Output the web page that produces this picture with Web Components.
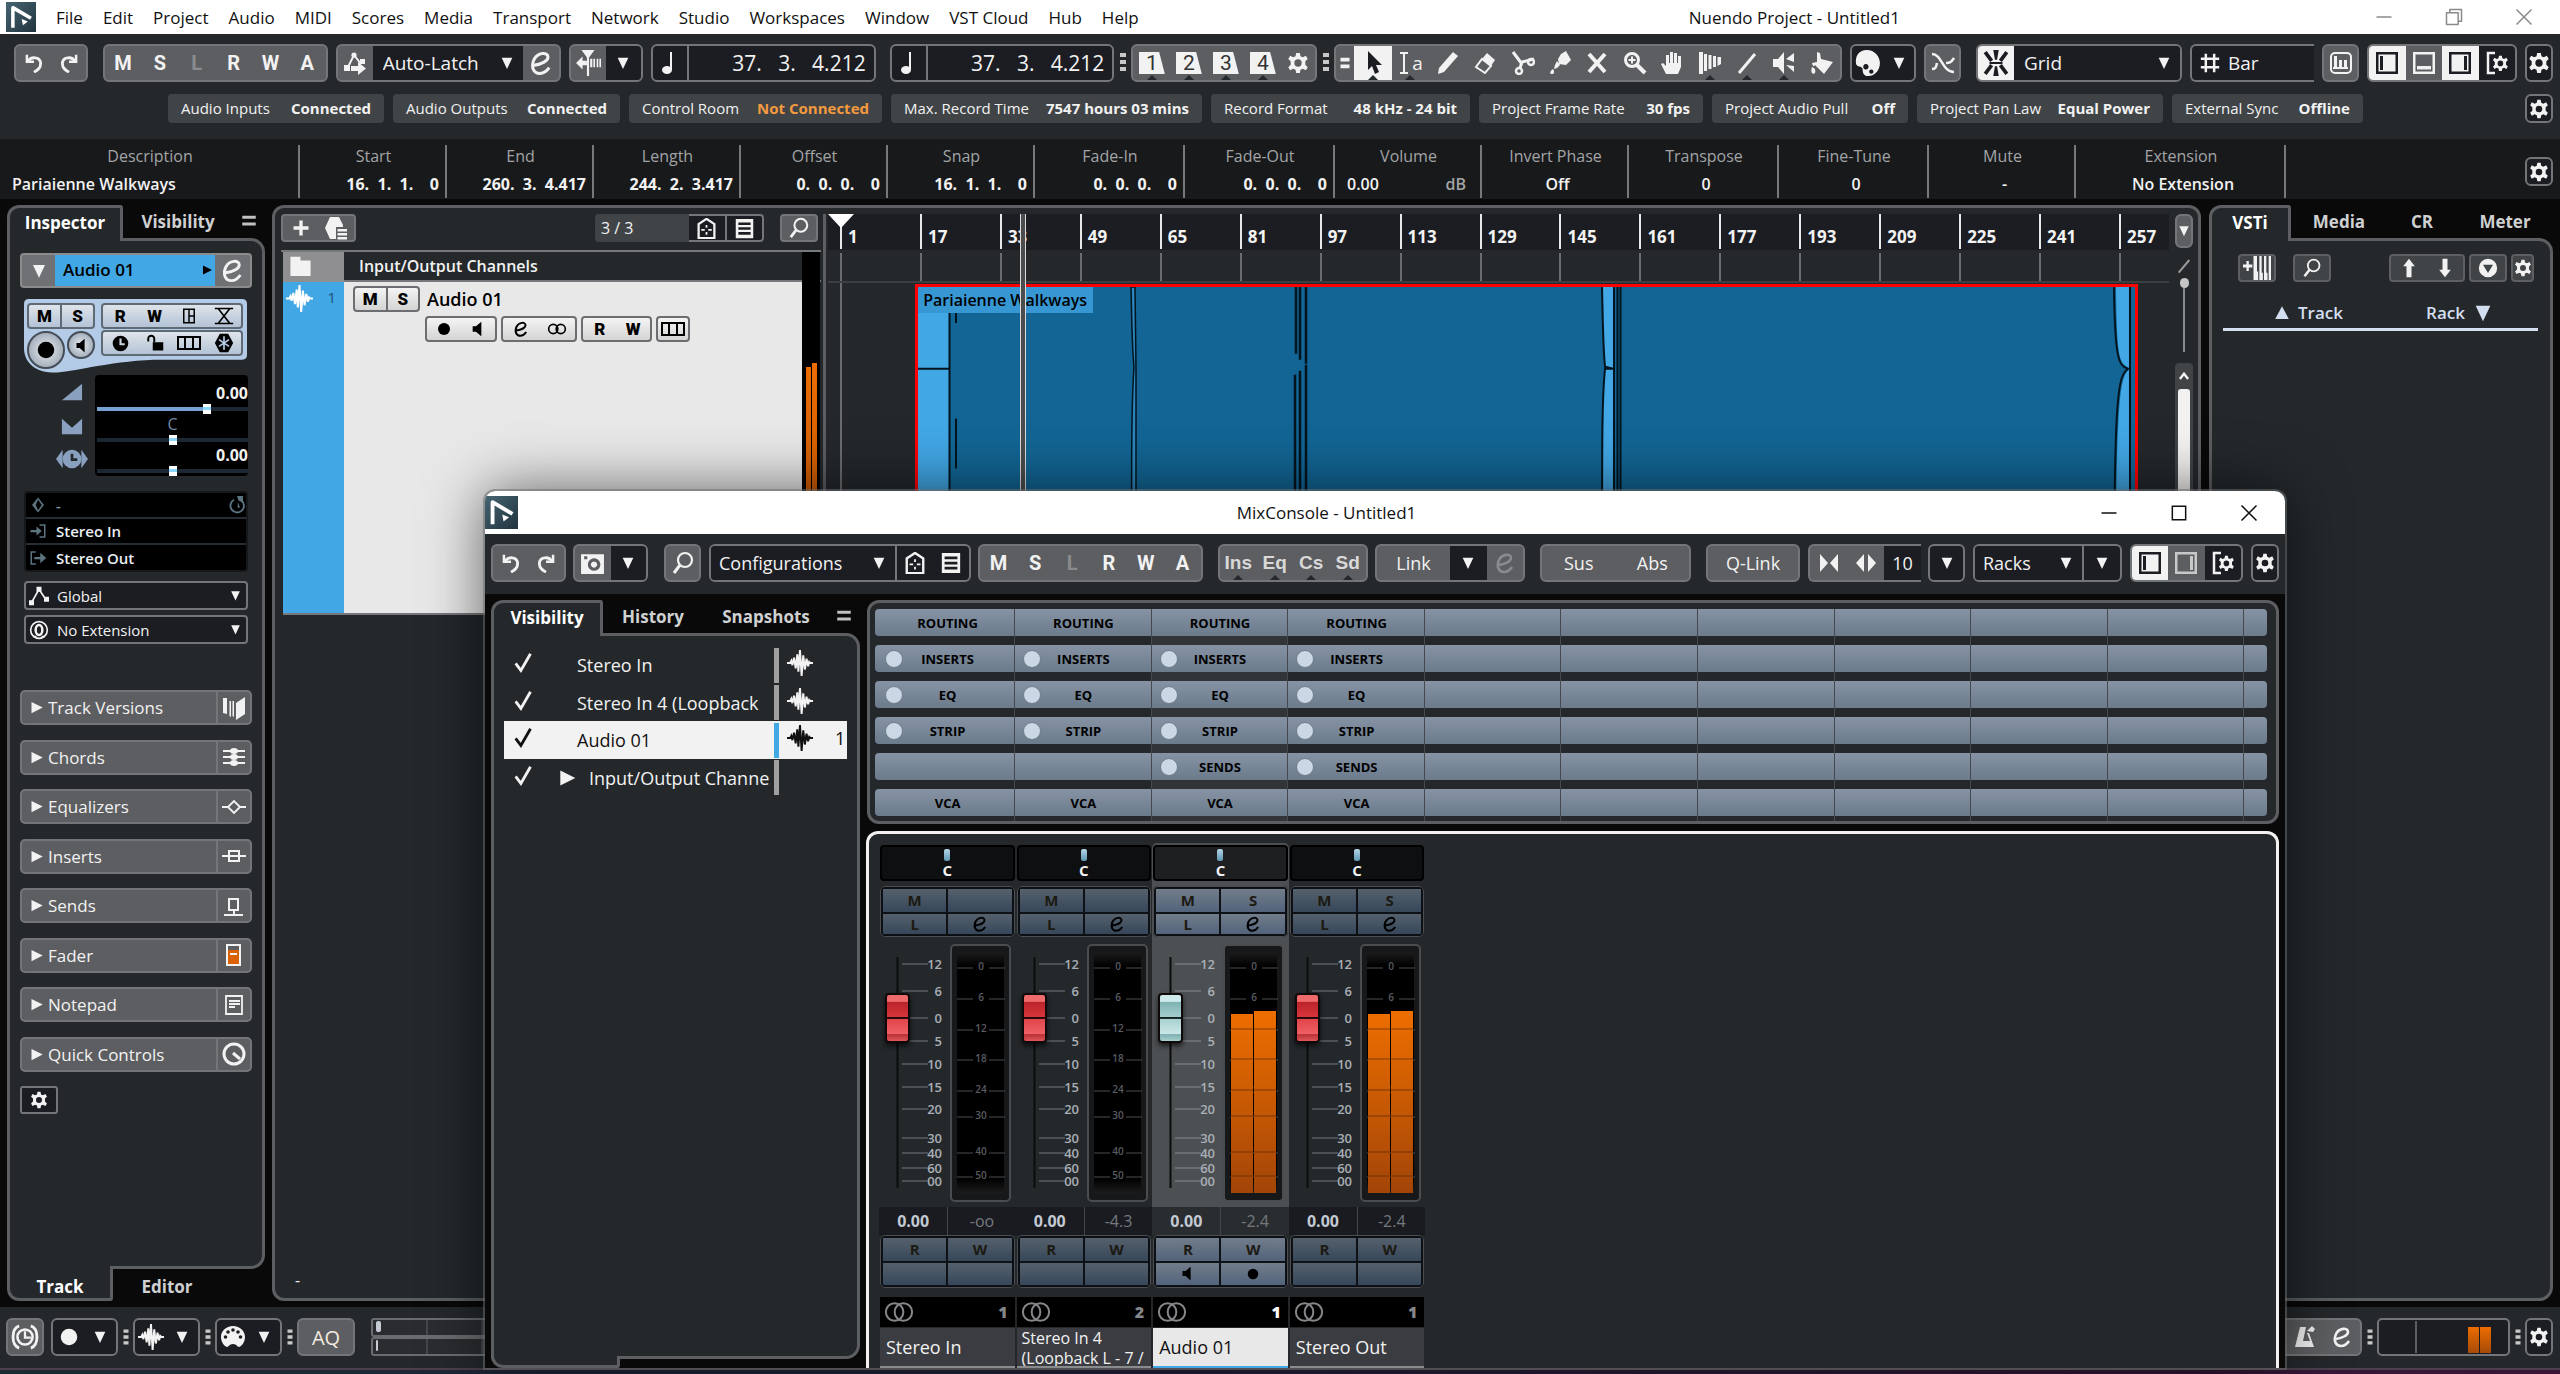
<!DOCTYPE html>
<html lang="en">
<head>
<meta charset="utf-8">
<title>Nuendo Project - Untitled1</title>
<style>
:root{
  --panel:#24282b; --void:#090909; --btn:#5d5e61; --edge:#747578; --field:#1c1d22;
  --frame:#5d5e62; --ink:#f2f2f2; --blue:#41a7e5; --orange:#ec6c00;
}
html,body{margin:0;height:100%;background:#090909;overflow:hidden}
body{font-family:"Open Sans","Noto Sans",sans-serif;color:#f2f2f2}
</style>
</head>
<body>
<nu-desktop></nu-desktop>
<script>
const ICONS = {
  undo:'<path d="M3.500 2v8.500H12" fill="none" stroke="currentColor" stroke-width="3"/><path d="M5 10c3-6 14-6 15 2 0 6-3 8-8 11" fill="none" stroke="currentColor" stroke-width="3.400"/>',
  redo:'<path d="M20.500 2v8.500H12" fill="none" stroke="currentColor" stroke-width="3"/><path d="M19 10C16 4 5 4 4 12c0 6 3 8 8 11" fill="none" stroke="currentColor" stroke-width="3.400"/>',
  autom:'<path d="M4 18 11 4l7 9" fill="none" stroke="currentColor" stroke-width="2"/><circle cx="11" cy="4" r="2.6"/><path d="M1 14h6v6H1zM17 8h5v5h-5z"/><path d="M8 15h7v-4l8 6.500-8 6.500v-4H8z"/>',
  edit:'<path d="M6 14C13 13 18 10 18 7c0-5-9-4-12 2-3 7 0 12 5 12 4 0 6-2 8-5" fill="none" stroke="currentColor" stroke-width="2.600"/>',
  locate:'<path d="M1 12l6-6v4h4v4H7v4zM6 0h12l-5 7h-2z"/><path d="M11 5h2v19h-2zM14 8h2v8h-2zM17 8h1.500v8H17zM20 8h1.500v8H20zM22.500 8H24v8h-1.500z"/>',
  note:'<ellipse cx="9" cy="19" rx="5" ry="4"/><path d="M12 1h2v18h-2z"/>',
  gear:'<path d="M10 1h4l.7 3.600 2.500 1.200 3.400-1.800 2 3.500-2.600 2.500v4l2.600 2.500-2 3.500-3.400-1.800-2.500 1.200L14 23h-4l-.7-3.600-2.500-1.200L3.400 20l-2-3.500L4 14v-4L1.400 7.500l2-3.500 3.400 1.800 2.500-1.200zM12 8a4 4 0 1 0 0 8 4 4 0 0 0 0-8z" fill-rule="evenodd"/>',
  dots:'<path d="M9 3h6v4H9zM9 10h6v4H9zM9 17h6v4H9z"/>',
  handle:'<path d="M6 5h12v5H6zM6 14h12v5H6z"/>',
  arrow:'<path d="M7 0v19l4-4 3 8 4-2-3-7h6z"/>',
  range:'<path d="M2 2h8M2 22h8M6 2v20" fill="none" stroke="currentColor" stroke-width="2"/>',
  pencil:'<path d="M2 23l1-6L17 1l5 4L8 21zM4 18l3 2" fill-rule="evenodd"/>',
  eraser:'<path d="M14 2l8 7-4 6-9-7z"/><path d="M9 8l9 7-6 7-9-6z" fill="none" stroke="currentColor" stroke-width="2"/>',
  scissors:'<path d="M2 1l9 12M23 8l-12 3-2 6" fill="none" stroke="currentColor" stroke-width="3"/><circle cx="20" cy="11" r="3" fill="none" stroke="currentColor" stroke-width="2.500"/><circle cx="8" cy="20" r="3" fill="none" stroke="currentColor" stroke-width="2.500"/>',
  glue:'<path d="M13 3l5-3 5 9-5 5-7-1-1-5zM9 10l3 4-3 3-3 1 1-4zM5 18c2 3 1 5-1 5s-3-2 1-5z"/>',
  ex:'<path d="M4 3l16 18M20 3L4 21" fill="none" stroke="currentColor" stroke-width="4"/>',
  zoomt:'<circle cx="9" cy="9" r="6.500" fill="none" stroke="currentColor" stroke-width="3"/><path d="M14 14l8 8" stroke="currentColor" stroke-width="4"/><path d="M5.500 8h7v2h-7zM8 5.500h2v7H8z"/>',
  hand:'<path d="M6 23l-5-10 2-1 3 3V4h3v8h1V1h3v11h1V2h3v10h1V5h3v11l-3 7z"/>',
  comp:'<path d="M1 1h4v22H1zM6 3h3v17H6zM10.500 4h3v14h-3zM15 5h3v11h-3zM19.500 6H23v7l-3.500 2z"/>',
  line:'<path d="M4 22L20 3" stroke="currentColor" stroke-width="3" fill="none"/>',
  speakert:'<path d="M1 8h5l6-7v22l-6-7H1zM14 8l8-6v9zM14 14l8 1v6z"/>',
  bucket:'<path d="M7 1l3 1 1 6 12 3-9 12-9-9-1 1h-1l-1-3 5-1zM2 16c3 1 4 3 3 6-2 2-5 0-3-6z"/>',
  palette:'<path d="M11 0C3 0 0 6 1 13c1 3 5 2 6 4 0 4 1 7 5 7 7 0 11-6 11-12S18 0 11 0zM10 13a2.500 2.500 0 1 0 .1 0M15 18a2 2 0 1 0 .1 0" fill-rule="evenodd"/>',
  curve:'<path d="M1 3c10 0 10 18 22 18M23 7c-3 5-5 5-8 5M1 18c3 0 4-1 5-6" fill="none" stroke="currentColor" stroke-width="2.500"/>',
  snap:'<path d="M9.500 0h5L13 9h-2zM9.500 24h5L13 15h-2z"/><path d="M2 2l6 8M22 2l-6 8M2 22l6-8M22 22l-6-8" stroke="currentColor" stroke-width="3.400"/><path d="M6 11h12v2H6z"/>',
  hash:'<path d="M7 1v22M17 1v22M1 7h22M1 17h22" stroke="currentColor" stroke-width="3"/>',
  quant:'<rect x="2" y="2" width="20" height="20" rx="4" fill="none" stroke="currentColor" stroke-width="2"/><path d="M5 5h3v13H5zM10 9h3v9h-3zM15 9h3v9h-3zM4 16h15v2H4z"/>',
  pleft:'<path d="M1 1h22v22H1zM3.500 3.500v17h17v-17z" fill-rule="evenodd"/><path d="M5 5h3v14H5z"/>',
  pbot:'<path d="M1 1h22v22H1zM3.500 3.500v17h17v-17z" fill-rule="evenodd"/><path d="M5 15h14v3.500H5z"/>',
  pright:'<path d="M1 1h22v22H1zM3.500 3.500v17h17v-17z" fill-rule="evenodd"/><path d="M16 5h3v14h-3z"/>',
  psetup:'<path d="M10 2H3v20h7" fill="none" stroke="currentColor" stroke-width="2.500"/><g transform="translate(7 4) scale(.7)"><path d="M10 1h4l.7 3.600 2.500 1.200 3.400-1.800 2 3.500-2.600 2.500v4l2.600 2.500-2 3.500-3.400-1.800-2.500 1.200L14 23h-4l-.7-3.600-2.500-1.200L3.400 20l-2-3.500L4 14v-4L1.400 7.500l2-3.500 3.400 1.800 2.500-1.200zM12 8a4 4 0 1 0 0 8 4 4 0 0 0 0-8z" fill-rule="evenodd"/></g>',
  down:'<path d="M4 4h16l-8 17z"/>',
  right:'<path d="M4 3l18 9-18 9z"/>',
  up:'<path d="M3 20h18L12 3z"/>',
  plus:'<path d="M10 3h4v7h7v4h-7v7h-4v-7H3v-4h7z"/>',
  preset:'<path d="M6 1h9l4 8v2h-7v12H6L1 12zM13.500 13H23v2.500h-9.500zM13.500 17H23v2.500h-9.500zM13.500 21H23v2.500h-9.500z"/>',
  agent:'<path d="M12 1l9 6v16H3V7z" fill="none" stroke="currentColor" stroke-width="2.600"/><path d="M11 8h2v3h-2zM11 16h2v3h-2zM6 12.500h4v2H6zM14 12.500h4v2h-4z"/>',
  list:'<path d="M2 1h20v22H2zM5 5v3h14V5zM5 10.500v3h14v-3zM5 16v3h14v-3z" fill-rule="evenodd"/>',
  find:'<ellipse cx="14" cy="9" rx="7" ry="7" fill="none" stroke="currentColor" stroke-width="2.200"/><path d="M9 14l-6 8" stroke="currentColor" stroke-width="3"/>',
  folder:'<path d="M1 2h11v4h11v17H1z"/>',
  wave:'<path d="M0 12h3l1-2 1 4 1.500-7L8 17l1.500-13 1 16L12 0l1.500 24L15 5l1.500 13L18 8l1.500 7 1-4 1 1H24" fill="none" stroke="currentColor" stroke-width="1.800"/>',
  rec:'<circle cx="12" cy="12" r="9"/>',
  mon:'<path d="M4 8h5l8-7v22l-8-7H4z"/>',
  infin:'<circle cx="7.500" cy="12" r="5.500" fill="none" stroke="currentColor" stroke-width="2"/><circle cx="16.500" cy="12" r="5.500" fill="none" stroke="currentColor" stroke-width="2"/>',
  stereo:'<circle cx="8.500" cy="12" r="7" fill="none" stroke="currentColor" stroke-width="1.600"/><circle cx="15.500" cy="12" r="7" fill="none" stroke="currentColor" stroke-width="1.600"/>',
  lanes:'<path d="M0 5h24v14H0zM2 7v10h5V7zM9 7v10h6V7zM17 7v10h5V7z" fill-rule="evenodd"/>',
  split:'<path d="M4 2h16v20H4zM6 4v16h5V4zM13 4v7h5V4zM13 13v7h5v-7z" fill-rule="evenodd"/>',
  xfade:'<path d="M1 3h4l14 18h4M23 3h-4L5 21H1M4 3h16M4 21h16" fill="none" stroke="currentColor" stroke-width="2"/>',
  clock:'<path d="M12 1a11 11 0 1 0 0 22 11 11 0 0 0 0-22zM10.500 5h3v6.500H18v3h-7.500z" fill-rule="evenodd"/>',
  lock:'<path d="M9 11h14v11H9z"/><path d="M11 11V6c0-5-8-5-8 0v4" fill="none" stroke="currentColor" stroke-width="2.600"/>',
  freeze:'<path d="M7 1h10l6 11-6 11H7L1 12z"/><path d="M12 4v16M6 8l12 8M18 8L6 16" stroke="#b9cde6" stroke-width="2"/>',
  vol:'<path d="M1 21L23 3v18z"/>',
  pan:'<path d="M1 4l11 10L23 4v17H1z"/>',
  delay:'<path d="M0 12l5-7v14zM24 12l-5-7v14z"/><path d="M12 5a7 7 0 1 0 0 14 7 7 0 0 0 0-14zM11 8h2v3.500h3v2h-5z" fill-rule="evenodd"/>',
  diamond:'<path d="M12 2l8 10-8 10-8-10zM12 5l-3 7 3 7 5-7z" fill-rule="evenodd"/>',
  phase:'<path d="M18 6A9 9 0 1 1 8 5" fill="none" stroke="currentColor" stroke-width="2.500"/><path d="M12 0h8v9l-6-3zM13 8l3 7-3 1z"/>',
  input:'<path d="M14 4h7v16h-7" fill="none" stroke="currentColor" stroke-width="2"/><path d="M2 10.500h8V6l7 6-7 6v-4.500H2z"/>',
  output:'<path d="M9 4H3v16h6" fill="none" stroke="currentColor" stroke-width="2"/><path d="M7 10.500h8V5l8 7-8 7v-5.500H7z"/>',
  nodes:'<path d="M3 20L12 4l8 12" fill="none" stroke="currentColor" stroke-width="2"/><path d="M0 17h6v6H0zM9 1h6v6H9zM18 13h6v6h-6z"/>',
  ext:'<ellipse cx="12" cy="12" rx="10" ry="10" fill="none" stroke="currentColor" stroke-width="2"/><ellipse cx="12" cy="12" rx="4" ry="6" fill="none" stroke="currentColor" stroke-width="3"/><path d="M5 20h4M15 20h4" stroke="currentColor" stroke-width="2"/>',
  versions:'<path d="M1 2h4v16l-4-1zM7.500 5H9v16l-1.500-1zM10.500 5H12v16l-1.500-1zM14 7l9-6v17l-9 6z"/>',
  chords:'<path d="M1 6h22M1 12h22M1 18h22" stroke="currentColor" stroke-width="2"/><ellipse cx="12" cy="6" rx="4" ry="3"/><ellipse cx="12" cy="12" rx="4" ry="3"/><ellipse cx="12" cy="18" rx="4" ry="3"/>',
  eq:'<path d="M0 12h6l6-6 6 6h6M6 12l6 6 6-6" fill="none" stroke="currentColor" stroke-width="1.800"/>',
  inserts:'<path d="M0 12h24M7 7h10v10H7z" fill="none" stroke="currentColor" stroke-width="2"/>',
  sends:'<path d="M2 21h19M12 21v-5M7 5h9v11H7z" fill="none" stroke="currentColor" stroke-width="2"/>',
  fader:'<path d="M5 2h13v20H5z" fill="none" stroke="currentColor" stroke-width="2"/><path d="M6 7h11v14H6z" fill="#d96100"/><path d="M8 11h7" stroke="currentColor" stroke-width="2"/>',
  notepad:'<path d="M4 3h16v18H4zM7 8h11M7 11h11M7 14h6" fill="none" stroke="currentColor" stroke-width="1.800"/>',
  knob:'<circle cx="12" cy="12" r="10" fill="none" stroke="currentColor" stroke-width="3"/><path d="M11 11l7 6" stroke="currentColor" stroke-width="3"/>',
  sync:'<circle cx="12" cy="12" r="6.500" fill="none" stroke="currentColor" stroke-width="2.200"/><path d="M11 7h2v4.500h4v2h-6z"/><path d="M7 2.500C0 5 0 19 7 21.500M17 2.500c7 2.500 7 16.500 0 19" fill="none" stroke="currentColor" stroke-width="2.400"/>',
  midi:'<path d="M12 1c7 0 12 5 12 11 0 5-3 9-6 10-2 0-2-3-6-3s-4 3-6 3c-3-1-6-5-6-10C0 6 5 1 12 1z"/><g fill="#1c1d22"><circle cx="4.500" cy="12" r="1.800"/><circle cx="7" cy="7" r="1.800"/><circle cx="12" cy="5" r="1.800"/><circle cx="17" cy="7" r="1.800"/><circle cx="19.500" cy="12" r="1.800"/></g>',
  metro:'<path d="M7 2h6l-3 14h7l-3-8h2l5 14H2z"/><path d="M14 6l5-5 3 3-2 3z"/>',
  camera:'<path d="M1 3h22v19H1zM13.500 7a6 6 0 1 0 .1 0zM13.500 10a3 3 0 1 1-.1 0zM4 5v3h3V5z" fill-rule="evenodd"/>',
  narrow:'<path d="M3 3l8 9-8 9zM21 3l-8 9 8 9z"/>',
  wide:'<path d="M10 3v18l-8-9zM14 3v18l8-9z"/>',
  vsti:'<path d="M0 9h3V6h2v3h3v2.500H5v3H3v-3H0zM9 1h3v14h1v8H9zM14 16V1h2v15h1v7h-3zM18 16V1h2v15h1v7h-3zM22 1h2v22h-2z"/>',
  aup:'<path d="M12 1l7 9h-4v13H9V10H5z"/>',
  adown:'<path d="M12 23l7-9h-4V1H9v13H5z"/>',
  circdown:'<path d="M12 1a11 11 0 1 0 0 22 11 11 0 0 0 0-22zM6 8h12l-6 10z" fill-rule="evenodd"/>',
  check:'<path d="M3 13l6 8L20 2" fill="none" stroke="currentColor" stroke-width="3.200"/>',
  menu:'<path d="M3 5h18v4H3zM3 14h18v4H3z"/>',
  chev:'<path d="M5 17l7-9 7 9" fill="none" stroke="currentColor" stroke-width="4"/>',
  min:'<path d="M3 12h18" stroke="currentColor" stroke-width="1.800"/>',
  max:'<path d="M4 4h16v16H4z" fill="none" stroke="currentColor" stroke-width="1.800"/>',
  restore:'<path d="M3 7h14v14H3zM7 7V3h14v14h-4" fill="none" stroke="currentColor" stroke-width="1.800" stroke-linejoin="round"/>',
  close:'<path d="M3 3l18 18M21 3L3 21" stroke="currentColor" stroke-width="1.800"/>',
  logo:'<defs><linearGradient id="g" x2="1" y2="1"><stop stop-color="#476471"/><stop offset="1" stop-color="#20343f"/></linearGradient></defs><path d="M0 0h24v24H0z" fill="url(#g)"/><path d="M5.500 20.500V4.500L20 13" fill="none" stroke="#fff" stroke-width="2.800" stroke-linejoin="round"/><path d="M12.500 13.500l5 2-4 3z" fill="#fff"/>'
};

const BASE = `
*{box-sizing:border-box}
:host{display:block;box-sizing:border-box}
button,select,input{font:inherit;color:inherit;margin:0}
button{background:none;border:0;padding:0;display:flex;align-items:center;justify-content:center;min-width:0;white-space:nowrap}
.grp{display:flex;flex:none;height:38px;border:2px solid var(--edge);border-radius:6px;background:var(--btn);overflow:hidden;color:var(--ink)}
.grp>*{flex:1 1 0;height:100%}
.dark{background:var(--field)}
.lit{background:#f2f2f2;color:#1c1d22}
.let{font:bold 20px Roboto,sans-serif}
.dim{color:#8a8b8e}
.dots{flex:none}
.notch>button:not(.plain){position:relative}
.notch>button:not(.plain)::after{content:"";position:absolute;bottom:-2px;left:50%;margin-left:-7px;border:7px solid transparent;border-top:0;border-bottom:7px solid var(--panel)}
h1,h2,p,ul,dl,dd,dt{margin:0;padding:0;font-weight:inherit;font-size:inherit}
`;
function part(name, css, html, setup){
  customElements.define(name, class extends HTMLElement{
    constructor(){ super(); this.attachShadow({mode:'open'}); }
    connectedCallback(){
      const t=document.createElement('template');
      t.innerHTML='<style>'+BASE+css+'</style>'+(typeof html==='function'?html(this):html);
      this.shadowRoot.replaceChildren(t.content.cloneNode(true));
      if(setup) setup(this);
    }
  });
}
const ic=(n,s=24,x='')=>`<nu-icon n="${n}" style="--s:${s}px;${x}"></nu-icon>`;
const ib=(n,label,cls='',s=24)=>`<button class="${cls}" aria-label="${label}">${ic(n,s)}</button>`;
const letters=['M','S','L','R','W','A'].map(l=>`<button class="let ${l==='L'?'dim':''}">${l}</button>`).join('');

part('nu-icon',':host{display:inline-block;flex:none;width:var(--s,24px);height:var(--s,24px)}svg{display:block;width:100%;height:100%}',
  e=>`<svg viewBox="0 0 24 24" fill="currentColor" aria-hidden="true">${ICONS[e.getAttribute('n')]}</svg>`);

part('nu-select',`
:host{display:grid;min-width:0;align-items:center;background:var(--field);color:var(--ink)}
select,nu-icon{grid-area:1/1}
select{appearance:none;border:0;background:none;width:100%;height:100%;padding:0 24px 0 var(--pl,10px)}
option{background:#1c1d22}
nu-icon{justify-self:end;margin-right:var(--pr,8px);pointer-events:none}`,
  e=>`<select aria-label="${e.getAttribute('label')}"><option>${e.getAttribute('value')}</option></select>${ic('down',+(e.getAttribute('arrow')||16))}`);

part('nu-title-bar',`
:host{background:#fff;color:#111;font-size:17px}
header{display:grid;grid-template-columns:auto 1fr auto;align-items:center;height:100%}
h1{text-align:center;padding-left:var(--tp,76px)}
nav{display:flex;align-items:center;gap:20px}
nav nu-icon{margin-left:6px}
.b nav nu-icon{margin-left:0}
.win{display:flex;justify-content:flex-end;gap:50px;padding-right:26px;color:var(--wc,#8a8a8a)}`,
  e=>{const m=(e.getAttribute('menu')||'').split(',').filter(Boolean);
   return `<header class="${m.length?'a':'b'}"><nav>${ic('logo',m.length?30:33)}${m.map(x=>`<button>${x}</button>`).join('')}</nav><h1>${e.getAttribute('title-text')}</h1>
   <div class="win">${ib('min','Minimise','',20)}${ib(m.length?'restore':'max','Maximise','',20)}${ib('close','Close','',20)}</div></header>`});

part('nu-toolbar',`
:host{display:flex;padding:10px 7px 0 14px}
.grp{margin-left:8px}style+.grp{margin-left:0}
.dots{width:17px;margin-top:6px;color:#c8c8c8;display:flex;justify-content:center}
.dots+.grp{margin-left:0}
.gap{width:8px}.time{font-size:21px;white-space:pre;display:flex;align-items:center;justify-content:flex-end;padding-right:8px}
nu-select{font-size:19px}
.num{flex:none;width:37px}
.num b{background:#f2f2f2;color:#333;font:21px/22px Roboto,sans-serif;width:26px;clip-path:polygon(0 0,78% 0,100% 100%,0 100%)}
.txt{font-size:19px}`,
`<div class="grp" style="width:74px">${ib('undo','Undo','',20)}${ib('redo','Redo','',20)}</div><i class="gap"></i>
<div class="grp" style="width:225px">${letters}</div>
<div class="grp" style="width:225px"><button aria-label="Automation panel" style="flex:none;width:35px">${ic('autom')}</button><nu-select label="Automation mode" value="Auto-Latch" style="flex:1"></nu-select><button aria-label="Open panel" style="flex:none;width:36px">${ic('edit',28)}</button></div>
<div class="grp" style="width:74px">${ib('locate','Auto-Scroll','',26)}${ib('down','Auto-Scroll options','dark',16)}</div>
<div class="grp dark" style="width:225px"><button aria-label="Time format" style="flex:none;width:36px;border-right:2px solid var(--edge)">${ic('note')}</button><span class="time">37.   3.   4.212</span></div><i class="gap"></i>
<div class="grp dark" style="width:224px"><button aria-label="Time format" style="flex:none;width:36px;border-right:2px solid var(--edge)">${ic('note')}</button><span class="time">37.   3.   4.212</span></div>
<span class="dots">${ic('dots')}</span>
<div class="grp notch" style="width:186px">${[1,2,3,4].map(n=>`<button class="num"><b>${n}</b></button>`).join('')}<button class="plain" aria-label="Set up">${ic('gear',22)}</button></div>
<span class="dots">${ic('dots')}</span>
<div class="grp notch" style="width:508px"><button class="plain" aria-label="Drag" style="flex:none;width:18px">${ic('handle',18)}</button>${ib('arrow','Object selection','lit')}<button aria-label="Range">${ic('range',24,'margin-right:-10px')}<span class="txt">a</span></button>${ib('pencil','Draw','plain')}${ib('eraser','Erase','plain')}${ib('scissors','Split','plain')}${ib('glue','Glue','plain')}${ib('ex','Mute','plain')}${ib('zoomt','Zoom','plain')}${ib('hand','Hand','plain')}${ib('comp','Comp')}${ib('line','Line')}${ib('speakert','Play')}${ib('bucket','Colour','plain')}</div>
<div class="grp dark" style="width:66px">${ib('palette','Project colours','',26)}${ib('down','Colours','',16)}</div>
<div class="grp" style="width:37px">${ib('curve','Snap to zero crossing')}</div><i class="gap"></i>
<div class="grp dark" style="width:206px"><button class="lit" aria-label="Snap" style="flex:none;width:36px">${ic('snap',26)}</button><nu-select label="Snap type" value="Grid"></nu-select></div>
<div class="grp dark" style="width:124px;border-right:0;border-radius:6px 0 0 6px"><button style="justify-content:flex-start;gap:8px;padding-left:8px" class="txt">${ic('hash',20)}Bar</button></div>
<div class="grp" style="width:37px">${ib('quant','Quantize')}</div>
<div class="grp dark" style="width:150px">${ib('pleft','Left zone','lit')}<button aria-label="Lower zone" style="background:var(--btn)">${ic('pbot')}</button>${ib('pright','Right zone','lit')}${ib('psetup','Window layout')}</div>
<div class="grp dark" style="width:28px">${ib('gear','Set up toolbar','',22)}</div>`);

part('nu-status-line',`
:host{display:flex;font-size:15px;line-height:20px;padding:0 7px 0 168px}
dl{display:grid;grid-template-columns:216px 227px 253px 311px 259px 224px 196px 246px 191px;gap:9px}
div{display:flex;justify-content:space-between;align-items:center;background:#404447;border-radius:4px;padding:0 13px 2px;height:29px;white-space:nowrap}
dd{font-weight:700}.warn{color:#f59a3e}
.grp{margin-left:auto;width:28px;height:29px}`,
()=>{const d=[['Audio Inputs','Connected'],['Audio Outputs','Connected'],['Control Room','Not Connected',1],['Max. Record Time','7547 hours 03 mins'],['Record Format','48 kHz - 24 bit'],['Project Frame Rate','30 fps'],['Project Audio Pull','Off'],['Project Pan Law','Equal Power'],['External Sync','Offline']];
return `<dl>${d.map(([a,b,w])=>`<div><dt>${a}</dt><dd class="${w?'warn':''}">${b}</dd></div>`).join('')}</dl><span class="grp dark">${ib('gear','Set up status line','',20)}</span>`});

part('nu-info-line',`
:host{display:flex;background:#18191b;font-size:16px;line-height:22px;padding:6px 7px 1px 0}
dl{display:grid;grid-template-columns:300px repeat(5,147px) 150px 150px 147px 147px 150px 150px 147px 210px}
div{border-right:2px solid #77787b;padding:0 6px 0 12px;text-align:center}
dt{color:#a2a4a6;margin-right:4px}dd{font-weight:600;margin-top:6px;white-space:pre}
.r dd{text-align:right;font-weight:700}.l dd{text-align:left}.s dd{display:flex;justify-content:space-between}.s i{font-style:normal;color:#a2a4a6;padding-right:8px}
.grp{margin:12px 0 0 auto;width:28px;height:29px}`,
()=>{const d=[['Description','Pariaienne Walkways','l'],['Start','16.  1.  1.    0','r'],['End','260.  3.  4.417','r'],['Length','244.  2.  3.417','r'],['Offset','0.  0.  0.    0','r'],['Snap','16.  1.  1.    0','r'],['Fade-In','0.  0.  0.    0','r'],['Fade-Out','0.  0.  0.    0','r'],['Volume','0.00<i>dB</i>','s'],['Invert Phase','Off',''],['Transpose','0',''],['Fine-Tune','0',''],['Mute','-',''],['Extension','No Extension','']];
return `<dl>${d.map(([a,b,c])=>`<div class="${c}"><dt>${a}</dt><dd>${b}</dd></div>`).join('')}</dl><span class="grp dark">${ib('gear','Set up info line','',20)}</span>`});

part('nu-tab-panel',`
:host{display:flex;flex-direction:column;min-height:0;min-width:0}
.tabs,.foot{display:flex;flex:none;height:33px;font-size:17px;font-weight:700;color:#cfd0d1}
.tabs button{padding-bottom:1px}
.tabs .menu{margin-left:auto;margin-right:7px;color:#c0c0c0}
.tabs button:first-child,.foot button:first-child{color:#fff;background:var(--panel);z-index:1}
.tabs button:first-child{border:3px solid var(--frame);border-bottom:0;border-radius:12px 3px 0 0;margin-bottom:-3px;height:36px;padding-bottom:5px}
.body{flex:1;min-height:0;background:var(--panel);border:3px solid var(--frame);border-radius:0 14px 14px 14px;display:flex;flex-direction:column}
.foot{height:32px}
.foot button{padding-top:3px}
.foot button:first-child{border:3px solid var(--frame);border-top:0;border-radius:0 0 3px 12px;margin-top:-3px;padding-top:8px}
.hasfoot .body{border-radius:0 14px 14px 0}
section{display:flex;flex-direction:column;flex:1;min-height:0}`,
e=>{const w=e.getAttribute('tabs').split(',').map(x=>x.split(':')), f=(e.getAttribute('foot')||'').split(',').filter(Boolean).map(x=>x.split(':'));
return `<section class="${f.length?'hasfoot':''}"><div class="tabs" role="tablist">${w.map(([t,n])=>`<button role="tab" style="width:${n}px">${t}</button>`).join('')}${e.hasAttribute('menu')?`<button class="menu" aria-label="Panel menu">${ic('menu',18)}</button>`:''}</div><div class="body"><slot></slot></div>${f.length?`<div class="foot" role="tablist" style="height:${e.getAttribute('foot-h')||32}px">${f.map(([t,n])=>`<button role="tab" style="width:${n}px" aria-label="${t||'Zone'}">${t}</button>`).join('')}</div>`:''}</section>`});

part('nu-section',`
:host{height:35px}
button{width:100%;height:100%;border:2px solid var(--edge);border-radius:5px;background:var(--btn);color:#f2f2f2;font-size:17px;display:grid;grid-template-columns:19px 1fr 34px;text-align:left;padding-left:7px}
span:last-child{display:grid;place-items:center;border-left:2px solid var(--edge);height:31px}`,
e=>`<button>${ic('right',15)}<span>${e.getAttribute('label')}</span><span>${ic(e.getAttribute('icon'),24)}</span></button>`);

part('nu-inspector',`
:host{flex:1;display:flex;flex-direction:column;padding:12px 10px 0}
.head{display:grid;grid-template-columns:33px 1fr 35px;height:35px;flex:none;border:2px solid #8b8b8d;border-radius:4px;overflow:hidden;background:#707174}
.head b{background:var(--blue);color:#000;font-size:17px;font-weight:600;display:flex;align-items:center;justify-content:space-between;padding:0 2px 2px 8px}
.ch{display:grid;flex:none;margin:11px 4px 0;height:76px;color:#000;grid-template-columns:100%}
.ch>*{grid-area:1/1}
.ch svg{width:223px;height:76px}
.cg{display:grid;grid-template-columns:68px 142px;column-gap:6px;padding:4px 3px 0;align-content:start}
.box{display:flex;height:26px;border:2px solid #5f6a75;border-radius:4px;background:linear-gradient(#dfe4ea,#b3c3d6);font:900 17px Roboto,sans-serif}
.box button{flex:1}.ms button+button{border-left:2px solid #5f6a75}
.rt{display:grid;gap:1px;align-content:start}
.rounds{display:flex;align-items:flex-start;gap:2px}
.rounds button{border:2px solid #454d57;border-radius:50%;background:radial-gradient(#e8ecf0,#8b99a8)}
.rounds .r1{width:38px;height:38px;margin-top:2px}.rounds .r2{width:28px;height:28px;margin-top:2px}
.vals{display:grid;grid-template-columns:71px 153px;margin:0 4px;flex:none;height:101px;font-size:16px}
.vals .i{display:grid;grid-template-rows:34px 33px 33px;justify-items:center;align-items:center;color:#8aa0bf;padding-left:24px}
.vals .v{background:#000;border-radius:4px;display:flex;flex-direction:column;padding:7px 0 0 2px;line-height:22px;font-weight:700;text-align:right}
.v .c{text-align:center;color:#6f86a6;font-weight:400;line-height:21px}
.v .z{line-height:21px}
input[type=range]{appearance:none;background:none;width:100%;height:10px;display:block;flex:none}
input::-webkit-slider-runnable-track{height:4px;background:linear-gradient(90deg,#76a2d4 var(--f,0%),#1b2733 var(--f,0%))}
input::-webkit-slider-thumb{appearance:none;width:8px;height:10px;margin-top:-3px;background:linear-gradient(#fff 30%,#8fd8ff 30% 60%,#fff 60%)}
.route{margin:15px 4px 0;background:#000;border:2px solid #15191c;border-radius:4px;height:81px;flex:none;font-size:15px;font-weight:600}
.route div{display:flex;align-items:center;gap:9px;height:26px;padding-left:3px;color:#5b7480;border-bottom:2px solid #262e33}
.route div:last-child{border:0}
.route span{color:#e9eff4;flex:1}
.sel{margin:9px 4px 0;height:29px;flex:none;border:2px solid var(--edge);border-radius:4px;display:grid;grid-template-columns:24px 1fr;align-items:center;background:var(--field);font-size:15px;padding-left:3px}
.sel+.sel{margin-top:5px}
.secs{display:flex;flex-direction:column;justify-content:space-between;height:382px;margin-top:46px;flex:none}
.set{width:38px;height:28px;margin-top:14px;border-radius:3px}`,
`<div class="head">${ib('down','Collapse','',18)}<b>Audio 01${ic('right',12)}</b>${ib('edit','Edit channel','',27)}</div>
<div class="ch"><svg viewBox="0 0 223 76"><path d="M5 0h213q5 0 5 5v52q0 5-5 5H130C80 64 45 76 28 75 8 74 0 62 0 50V5q0-5 5-5z" transform="scale(1 .98)" fill="#b4cbe8"/></svg>
<div class="cg"><div><div class="box ms"><button>M</button><button>S</button></div><div class="rounds"><button class="r1" aria-label="Record enable">${ic('rec',22)}</button><button class="r2" aria-label="Monitor">${ic('mon',15)}</button></div></div>
<div class="rt"><div class="box"><button>R</button><button>W</button>${ib('split','Lanes','',18)}${ib('xfade','Auto fades','',20)}</div><div class="box">${ib('clock','Timebase','',17)}${ib('lock','Lock','',18)}${ib('lanes','Show lanes','',24)}${ib('freeze','Freeze','',20)}</div></div></div></div>
<div class="vals"><div class="i">${ic('vol',22)}${ic('pan',22)}${ic('delay',32)}</div><div class="v"><span>0.00</span><input type="range" aria-label="Volume" value="74" style="--f:73%"><span class="c">C</span><input type="range" aria-label="Pan" value="50"><span class="z">0.00</span><input type="range" aria-label="Delay" value="50"></div></div>
<div class="route"><div>${ic('diamond',18)}<span style="color:#8a9aa5">-</span>${ic('phase',18)}</div><div>${ic('input',18)}<span>Stereo In</span></div><div>${ic('output',18)}<span>Stereo Out</span></div></div>
<div class="sel">${ic('nodes',20)}<nu-select label="Automation" value="Global" arrow="13" style="--pl:4px;--pr:4px"></nu-select></div>
<div class="sel">${ic('ext',20)}<nu-select label="Extension" value="No Extension" arrow="13" style="--pl:4px;--pr:4px"></nu-select></div>
<div class="secs">${[['Track Versions','versions'],['Chords','chords'],['Equalizers','eq'],['Inserts','inserts'],['Sends','sends'],['Fader','fader'],['Notepad','notepad'],['Quick Controls','knob']].map(([a,b])=>`<nu-section label="${a}" icon="${b}"></nu-section>`).join('')}</div>
<div class="grp dark set">${ib('gear','Set up inspector','',18)}</div>`);

part('nu-track-list',`
:host{display:flex;flex-direction:column;width:540px;flex:none}
.bar{display:flex;height:28px;flex:none}
.bar .grp{height:28px;border-radius:4px}
.count{background:#404447;width:94px;margin-left:auto;font-size:16px;padding-left:6px;line-height:28px;border-radius:4px 0 0 4px}
.rows{margin-top:8px;border-top:2px solid #77787b}
.row{display:grid;grid-template-columns:61px 458px 18px;margin-left:2px;border-bottom:2px solid #77787b}
.f{height:30px;font-size:16px;font-weight:600}
.f>i{background:#8f8f91;padding:3px 5px}
.f>span{padding-left:15px;line-height:29px}
.m{background:#000;display:flex;align-items:flex-end;justify-content:center;gap:1px}
.m i{width:5px;background:linear-gradient(var(--orange),#b44e06)}
.t{height:333px;color:#000}
.t>.id{background:var(--blue);color:#fff;display:flex;justify-content:space-between;padding:3px 8px 0 3px;font-size:15px}
.t>.id span{color:#1f4f75;padding-top:2px}
.body{background:#e8e8e8;padding:4px 9px;font-size:18px}
.l1{display:flex;align-items:center;gap:7px;font-weight:600}
.l2{display:flex;gap:4px;margin:4px 0 0 72px}
.bx{display:flex;height:26px;border:2px solid #6c6d70;border-radius:4px;background:linear-gradient(#f4f4f4,#d4d4d4);font:900 17px Roboto,sans-serif}
.bx button{flex:1}
.end{margin:auto 0 7px 14px;font-size:16px}`,
`<div class="bar"><div class="grp" style="width:75px">${ib('plus','Add track','',20)}${ib('preset','Use preset','',24)}</div><span class="count">3 / 3</span><div class="grp dark" style="width:75px;border-radius:0 4px 4px 0;border-left:0">${ib('agent','Visibility agents','',21)}<button aria-label="Filter" style="border-left:2px solid var(--edge)">${ic('list',21)}</button></div><div class="grp" style="width:38px;margin:0 3px 0 16px">${ib('find','Find tracks','',22)}</div></div>
<div class="rows"><div class="row f"><i>${ic('folder',25,'height:22px')}</i><span>Input/Output Channels</span><i class="m" style="background:#000"></i></div>
<div class="row t"><div class="id">${ic('wave',27)}<span>1</span></div><div class="body"><div class="l1"><div class="bx" style="width:67px"><button>M</button><button style="border-left:2px solid #6c6d70">S</button></div>Audio 01</div>
<div class="l2"><div class="bx" style="width:72px">${ib('rec','Record enable','',16)}${ib('mon','Monitor','',16)}</div><div class="bx" style="width:76px">${ib('edit','Edit channel','',18)}${ib('infin','Stereo','',20)}</div><div class="bx" style="width:71px"><button>R</button><button>W</button></div><div class="bx" style="width:34px">${ib('lanes','Lanes','',24)}</div></div></div>
<div class="m"><i style="height:246px"></i><i style="height:250px"></i></div></div></div><span class="end">-</span>`);

part('nu-arranger',`
:host{flex:1;display:grid;grid-template-rows:36px 33px 1fr;position:relative;min-width:0;overflow:hidden}
.rul,.lane{display:flex;overflow:hidden;padding-left:12px}
.rul{background:var(--field);font-size:17px;font-weight:700}
.rul span,.lane span{flex:0 0 6.015%;border-left:2px solid #e8e8e8;padding:11px 0 0 6px;margin-bottom:1px}
.lane{border-bottom:2px solid #3c3f42}
.lane span{border-color:#6a6c6f;margin-top:3px;margin-bottom:0}
.tracks{display:grid;grid-template-columns:6.500% 91.200% 1fr;overflow:hidden}
.tracks>i{border-right:2px solid #6a6c6f;width:14px}
.ev{display:grid;height:332px;border:3px solid #f00;border-bottom:0;background:#126594;margin-top:1px;overflow:hidden}
.ev>*{grid-area:1/1}
svg{width:100%;height:100%;display:block}
.ev b{justify-self:start;align-self:start;background:#3797d3;color:#000;font-size:16px;line-height:26px;padding:0 6px 0 5px;font-weight:600}
.ph{position:absolute;left:0;top:0;width:26px;height:14px;background:#fff;clip-path:polygon(0 0,100% 0,50% 100%)}
.cur{position:absolute;left:192px;top:0;bottom:0;width:6px;border:1px solid #dcdcdc;border-width:0 1px;background:#4a4c4e}`,
()=>{const n=Array.from({length:17},(_,i)=>1+i*16);
return `<div class="rul">${n.map(x=>`<span>${x}</span>`).join('')}</div><div class="lane">${n.map(()=>'<span></span>').join('')}</div>
<div class="tracks"><i></i><div class="ev"><svg viewBox="0 0 1217 330" preserveAspectRatio="none" fill="none" stroke="#03141f" stroke-width="2">
<path d="M0 0h31v330H0z" fill="#41a7e5" stroke="none"/><path d="M0 82h32M31.500 0v330"/><path d="M38 26v10M38 132v50"/><path d="M213 0c1 40 1 60 3 80-2 30-3 60-2 250h4V82L217 0z" fill="#2b86bd" stroke-width="1.500"/>
<path d="M378 0v67M382 0v73M388 0v77M377 88v242M382 84v246M388 78v252" stroke-width="2.500"/>
<path d="M684 0c1 40 1 60 3 82-3 30-3 60-3 248h11V0z" fill="#41a7e5" stroke="none"/><path d="M684 0c1 40 1 60 3 80l8 2h-8c-3 30-3 60-3 248M696 0v330M699.500 0v330M702.500 0v330"/>
<path d="M1198 0c1 80 4 75 14 82-10 8-14 20-14 248h14V0z" fill="#41a7e5" stroke="none"/><path d="M1196 0c1 70 4 79 14 82-10 8-14 20-14 248M1212 0v330"/></svg><b>Pariaienne Walkways</b></div></div>
<i class="ph"></i><i class="cur"></i>`});

part('nu-scroll-rail',`
:host{display:flex;flex-direction:column;align-items:center;width:18px;margin:0 5px 0 6px;flex:none}
.top{height:34px;width:18px}
.rail{display:flex;flex-direction:column;align-items:center;height:74px;margin-top:4px}
.rail::before{content:"";width:9px;height:10px;border-radius:5px;background:#c4c4c4}
.rail::after{content:"";width:2px;flex:1;background:#8a8b8d}
.sb{background:#404447;border-radius:4px;width:18px;flex:1;margin-top:11px;display:flex;flex-direction:column;align-items:center;padding-top:6px}
.sb i{width:12px;border-radius:3px;background:#f2f2f2;flex:1;margin-top:6px}`,
`<div class="grp top">${ib('down','Ruler','',14)}</div>${ic('line',16,'margin-top:10px;color:#9a9a9c')}<div class="rail"></div><div class="sb">${ic('chev',14)}<i></i></div>`);

part('nu-right-zone',`
:host{padding:13px 12px 0 11px}
.bar{display:flex}.bar .grp{height:28px;background:#404447;border-color:#5d5f62;border-radius:4px}
.heads{display:flex;justify-content:space-between;margin-top:16px;padding:0 44px 0 50px;border-bottom:3px solid #d3dff0;height:33px;font-size:17px;font-weight:600;color:#d3dff0;line-height:28px}
.heads button{gap:7px;height:30px}`,
`<div class="bar" style="padding:0 4px 0 15px"><div class="grp" style="width:38px">${ib('vsti','Add instrument','',28)}</div><div class="grp" style="width:38px;margin-left:17px">${ib('find','Find','',20)}</div><div class="grp" style="width:76px;margin-left:auto">${ib('aup','Previous','',20)}${ib('adown','Next','',20)}</div><div class="grp" style="width:38px;margin-left:4px">${ib('circdown','Options','',20)}</div><div class="grp" style="width:23px;margin-left:4px">${ib('gear','Settings','',18)}</div></div>
<div class="heads"><button>${ic('up',18)}Track</button><button>Rack${ic('down',22)}</button></div>`);

part('nu-transport',`
:host{display:flex;background:var(--panel);padding:11px 7px 0 6px}
.dots{width:15px;margin-top:9px;color:#c8c8c8;display:flex;justify-content:center}
.in{display:grid;grid-template-rows:19px 19px;width:240px;margin-left:16px}
.in i{border:2px solid #6a6c6f;border-radius:3px;background:repeating-linear-gradient(90deg,#2a2c30 0 53px,#44464a 53px 55px);padding:1px 3px}
.in i::before{content:"";display:block;width:5px;height:11px;border-radius:2px;background:#c6cbd6}
.in i+i::before{width:2px}
.out{width:133px;display:flex;align-items:flex-end;padding:0 17px 1px 36px;border-radius:5px}
.out>i{flex:none}.out .s{width:2px;height:32px;background:#5d5e62;margin-right:auto}.out .m{width:11px;height:26px;background:linear-gradient(var(--orange),#a64b08);margin-left:1px}`,
`<div class="grp" style="width:38px">${ib('sync','Latency compensation','',28)}</div>
<div class="grp dark" style="width:67px;margin-left:7px">${ib('rec','Record mode','',22)}${ib('down','Record mode menu','',16)}</div><span class="dots">${ic('dots',20)}</span>
<div class="grp dark" style="width:67px">${ib('wave','Audio record mode','',26)}${ib('down','Audio menu','',16)}</div><span class="dots">${ic('dots',20)}</span>
<div class="grp dark" style="width:67px">${ib('midi','MIDI record mode','',24)}${ib('down','MIDI menu','',16)}</div><span class="dots">${ic('dots',20)}</span>
<div class="grp" style="width:58px;font-size:20px;color:#f4ecdf"><button>AQ</button></div>
<div class="in"><i></i><i></i></div>
<div class="grp" style="width:114px;margin-left:auto"><i></i>${ib('metro','Metronome')}${ib('edit','Metronome setup')}</div><span class="dots">${ic('dots',20)}</span>
<div class="grp dark out"><i class="s"></i><i class="m"></i><i class="m"></i></div><span class="dots">${ic('dots',20)}</span>
<div class="grp dark" style="width:28px">${ib('gear','Set up transport','',20)}</div>`);

part('nu-visibility-list',`
:host{padding:10px 10px 0;font-size:18px}
ul{list-style:none}
li{display:grid;grid-template-columns:48px 222px 5px 1fr;align-items:center;height:38px;overflow:hidden;white-space:nowrap}
li:nth-child(even){height:37px}
label{display:contents}
input{appearance:none;width:0;height:0;position:absolute}
.ck{padding-left:9px}
.nm{padding-left:25px;overflow:hidden;display:flex;align-items:center;height:30px}
.g .nm{padding-left:7px}
.br{background:#a0a0a0;height:35px}
.on{background:#f2f2f2;color:#111}.on .br{background:var(--blue)}
.w{display:flex;align-items:center;padding:0 0 4px 8px;gap:22px}`,
`<ul>${[['Stereo In'],['Stereo In 4 (Loopback'],['Audio 01','on'],['Input/Output Channe','g']].map(([n,c='' ])=>`<li class="${c}"><label><input type="checkbox" checked><span class="ck">${ic('check',21)}</span><span class="nm">${c==='g'?ic('right',20,'margin-right:12px;margin-left:-2px'):''}${n}</span></label><i class="br"></i><span class="w">${c==='g'?'':ic('wave',26)}${c==='on'?'1':''}</span></li>`).join('')}</ul>`);

part('nu-racks',`
:host{padding:6px 9px 0 5px}
.row{display:grid;grid-template-columns:280fr repeat(9,273fr) 45fr;height:36px}
.row:last-child{height:32px}
.row>div{border-right:1px solid #45494d;min-width:0}
.row>div:last-child{border:0}.row>div:nth-child(3){background:#323538}
button{width:100%;height:27px;background:linear-gradient(#8693a4,#6b7b8c);color:#000;font-size:13px;font-weight:700;display:grid;grid-template-columns:34px 1fr 33px;align-items:center;justify-items:center}
button i{width:18px;height:18px;border-radius:50%;background:#cbd7e4;border:1px solid #6f7c8a}
.row>div:first-child button{border-radius:4px 0 0 4px;grid-template-columns:38px 1fr 32px}.row>div:last-child button{border-radius:0 4px 4px 0}
button span{grid-column:2}`,
()=>[['ROUTING',0,0],['INSERTS',1,0],['EQ',1,0],['STRIP',1,0],['SENDS',1,2],['VCA',0,0]].map(([t,dot,from])=>`<div class="row">${Array.from({length:11},(_,i)=>`<div><button aria-label="${t}">${i<4&&i>=from?(dot?'<i></i>':'')+`<span>${t}</span>`:''}</button></div>`).join('')}</div>`).join(''));

part('nu-strip',`
:host{min-width:0;padding:2px 1px 0;display:flex;flex-direction:column}
:host([on]) .up{background:#4d5053;border-radius:5px 5px 0 0}
.up{margin:-2px -1px 0;padding:2px 1px 0;display:flex;flex-direction:column}
.pan{height:36px;border:2px solid #000;border-radius:4px;background:#0e0f11;text-align:center;font-size:15px;font-weight:700;line-height:18px}
:host([on]) .pan{background:#1e1f21}
.pan i{display:block;width:6px;height:12px;margin:2px auto 0;border-radius:2px;background:linear-gradient(#b4d6e6,#5d97b3)}
.bx{display:grid;grid-template-columns:1fr 1fr;grid-template-rows:25fr 22fr;gap:2px;border:2px solid #0b0d10;outline:1px solid #4b4e52;outline-offset:-1px;border-radius:5px;background:#0e1216;padding:1px;overflow:hidden;font-size:15px;line-height:18px;font-weight:700;color:#1c1a12}
.bx button{background:linear-gradient(#55606c,#36475a);min-height:0}
.bx nu-icon{color:#000}
:host([on]) .bx button{background:linear-gradient(#727d8b,#52637a)}
.b1{height:51px;margin-top:5px}.b2{height:53px;grid-template-rows:1fr 1fr}
.fd{height:270px;display:grid;grid-template-columns:100%}
.fd>*{grid-area:1/1}
svg{width:100%;height:270px;overflow:visible;font-size:13px;font-weight:600;fill:#a9afb6}
.mt text{fill:#5a5c60;font-size:10px}
input{writing-mode:vertical-lr;direction:rtl;appearance:none;background:none;width:26px;height:266px;margin:2px 0 0 5px;padding:0}
input::-webkit-slider-runnable-track{width:26px;background:none}
input::-webkit-slider-thumb{appearance:none;width:25px;height:50px;border:2px solid #10090a;border-radius:4px;background:linear-gradient(#ef6a6a 0 14%,#b8242a 15%,#d8343b 47%,#1c0808 48% 51%,#e0454b 52%,#ef5f63 84%,#b83236 86%,#e0555a);box-shadow:0 3px 5px #000a}
:host([on]) input::-webkit-slider-thumb{background:linear-gradient(#cfeaea 0 14%,#7fb2b2 15%,#a3cdcd 47%,#12201f 48% 51%,#a9d0d0 52%,#c9e6e6 84%,#7fb0b0 86%,#a9d0d0)}
.v{display:grid;grid-template-columns:1fr 1fr;height:28px;margin:0 -1px;background:#1a1b20;text-align:center;font-size:16px;line-height:28px;font-weight:700;color:#c3cad2}
.v span+span{font-weight:400;color:#75797e;border-left:1px solid #44474a}
:host([on]) .v{background:#292d30}
.n{display:flex;justify-content:space-between;align-items:center;height:30px;background:#000;margin-top:9px;padding:0 7px 0 4px;font-size:16px;font-weight:700;color:#85878a}
:host([on]) .n b{color:#fff}
.name{height:40px;margin-top:1px;background:#3b3c41;border-bottom:2px solid #8a8b8d;padding-left:6px;font-size:18px;line-height:39px;white-space:nowrap;overflow:hidden}
.name.two{font-size:16px;line-height:20px;padding-left:5px}
:host([on]) .name{background:#e8e8e8;color:#111;border-color:var(--blue)}`,
e=>{const a=n=>e.getAttribute(n), on=e.hasAttribute('on'), m=a('meter');
const sc=[[12,27],[6,54],[0,81],[5,104],[10,127],[15,150],[20,172],[30,201],[40,216],[60,231],['00',244]];
const ms=[[0,29],[6,60],[12,91],[18,121],[24,152],[30,178],[40,214],[50,238]];
return `<div class="up"><div class="pan"><i></i>C</div>
<div class="bx b1"><button>M</button><button aria-label="Solo">${a('solo')||''}</button><button>L</button><button aria-label="Edit">${ic('edit',18)}</button></div>
<div class="fd"><svg><defs><linearGradient id="o" x2="0" y2="1"><stop stop-color="#ee6e00"/><stop offset="1" stop-color="#a24507"/></linearGradient><linearGradient id="k" x2="0" y2="1"><stop stop-color="#1c1c1c"/><stop offset=".06" stop-color="#000"/><stop offset=".94" stop-color="#000"/><stop offset="1" stop-color="#1c1c1c"/></linearGradient></defs>
<path d="M17.500 20v231" stroke="#0b0c0d" stroke-width="2"/>
${sc.map(([t,y])=>`<path d="M22 ${y}h26" stroke="${on?'#6a6e72':'#4c5054'}" stroke-width="2"/><text x="62" y="${y+5}" text-anchor="end">${t}</text>`).join('')}
<g class="mt"><rect x="71" y="8" width="59" height="256" rx="4" fill="#17181a" stroke="#4a4d50" stroke-width="2"/><rect x="77" y="15" width="47" height="241" fill="url(#k)"/>
${ms.map(([t,y])=>`<path d="M77 ${y+2}h16M109 ${y+2}h16" stroke="#4a4c4f"/><text x="101" y="${y+4}" text-anchor="middle">${t}</text>`).join('')}
${m?`<path d="M78 77h22v179H78zM101 74h22v182h-22z" fill="url(#o)"/>`+ms.slice(2).map(([,y])=>`<path d="M78 ${y+1}h45" stroke="#5c2a06" stroke-opacity=".7"/>`).join(''):''}</g></svg>
<input type="range" aria-label="Level ${a('name')}" min="0" max="1000" value="751"></div></div>
<div class="v"><span>0.00</span><span>${a('peak')}</span></div>
<div class="bx b2"><button>R</button><button>W</button><button aria-label="Monitor">${on?ic('mon',15):''}</button><button aria-label="Record enable">${on?ic('rec',14):''}</button></div>
<div class="n">${ic('stereo',30)}<b>${a('num')}</b></div><div class="name ${a('name').includes('|')?'two':''}">${a('name').replace('|','<br>')}</div>`});

part('nu-mix-toolbar',`
:host{display:flex;padding:10px 6px 0;background:var(--panel);height:60px;font-size:18px}
.grp{margin-right:7px}.g2{font:bold 19px "Liberation Sans",sans-serif;color:#d8d8d8}
.dk{background:var(--field)}nu-select{font-size:18px;--pl:8px}`,
`<div class="grp" style="width:75px">${ib('undo','Undo','',20)}${ib('redo','Redo','',20)}</div>
<div class="grp" style="width:75px;margin-right:16px">${ib('camera','Snapshot','',25)}${ib('down','Snapshot menu','dk',16)}</div>
<div class="grp" style="width:37px;margin-right:8px">${ib('find','Find channels')}</div>
<div class="grp dark" style="width:262px;margin-right:7px"><nu-select label="Configurations" value="Configurations" style="flex:none;width:184px"></nu-select><button aria-label="Channel agents" style="border-left:2px solid var(--edge)">${ic('agent',22)}</button>${ib('list','Channel filter','',22)}</div>
<div class="grp" style="width:225px;margin-right:15px">${letters}</div>
<div class="grp notch g2" style="width:150px;margin-right:7px"><button>Ins</button><button>Eq</button><button>Cs</button><button>Sd</button></div>
<div class="grp" style="width:150px;margin-right:15px"><button style="flex:2">Link</button>${ib('down','Link menu','dk',16)}${ib('edit','Link edit','dim')}</div>
<div class="grp" style="width:151px;margin-right:15px"><button>Sus</button><button>Abs</button></div>
<div class="grp" style="width:94px;margin-right:8px"><button>Q-Link</button></div>
<div class="grp" style="width:113px;border-right:0;border-radius:6px 0 0 6px">${ib('narrow','Narrower')}${ib('wide','Wider')}<button class="dk">10</button></div>
<div class="grp dark" style="width:37px;margin-right:8px">${ib('down','Zoom menu','',16)}</div>
<div class="grp dark" style="width:149px;margin-right:8px"><nu-select label="Racks" value="Racks" style="flex:3"></nu-select><button aria-label="Rack presets" style="border-left:2px solid var(--edge)">${ic('down',16)}</button></div>
<div class="grp dark" style="width:113px;margin-right:8px">${ib('pleft','Left zone','lit')}<button aria-label="Right zone" style="background:var(--btn);color:#c8c8c8">${ic('pright')}</button>${ib('psetup','Window layout')}</div>
<div class="grp dark" style="width:28px;margin:0">${ib('gear','Set up toolbar','',20)}</div>`);

part('nu-mix-console',`
:host{display:flex;flex-direction:column;background:var(--void);border-radius:10px 10px 0 0;overflow:hidden;box-shadow:0 0 0 2px #6b6d6f88,0 0 60px #0009}
nu-title-bar{height:43px;flex:none;--wc:#111;--tp:36px}
.b{flex:1;min-height:0;display:grid;grid-template-columns:369px 1fr;gap:7px;padding:6px 6px 0}
.r{display:flex;flex-direction:column;min-width:0;min-height:0}
.top{border:3px solid var(--frame);border-radius:12px;background:var(--panel);height:224px;flex:none}
.low{flex:1;min-height:0;margin-top:7px;border:3px solid #f4f0f0;border-bottom:0;border-radius:12px 12px 0 0;background:var(--panel);padding:9px 9px 0 10px;display:grid;grid-template-columns:repeat(4,273fr) 1682fr;margin-left:-1px}`,
`<nu-title-bar title-text="MixConsole - Untitled1"></nu-title-bar><nu-mix-toolbar></nu-mix-toolbar>
<div class="b"><nu-tab-panel tabs="Visibility:112,History:100,Snapshots:126" menu foot=":129,:1" foot-h="9"><nu-visibility-list></nu-visibility-list></nu-tab-panel>
<div class="r"><nu-racks class="top"></nu-racks><div class="low">
<nu-strip name="Stereo In" num="1" peak="-oo"></nu-strip><nu-strip name="Stereo In 4|(Loopback L - 7 /" num="2" peak="-4.3"></nu-strip><nu-strip on name="Audio 01" num="1" peak="-2.4" solo="S" meter="1"></nu-strip><nu-strip name="Stereo Out" num="1" peak="-2.4" solo="S" meter="1"></nu-strip></div></div></div>`);

part('nu-desktop',`
:host{display:flex;flex-direction:column;height:100vh;position:relative;overflow:hidden;background:var(--void)}
nu-title-bar{height:34px;flex:none}
.head{background:var(--panel);height:105px;flex:none}
nu-status-line{margin-top:12px}
nu-info-line{height:60px;flex:none}
main{flex:1;min-height:0;display:grid;grid-template-columns:258px 1fr 344px;column-gap:7px;padding:6px 7px}
.mid{border:3px solid var(--frame);border-radius:12px;background:var(--panel);display:flex;padding:6px 0 0 6px;min-width:0;margin-right:1px;overflow:hidden}
.split{width:3px;background:#5d5e62;margin:0 2px;flex:none}
nu-transport{height:61px;flex:none}
footer{height:6px;flex:none;background:linear-gradient(90deg,#1b2a33,#22223a 45%,#3a1536);border-top:2px solid #4d3f4d}
nu-mix-console{position:absolute;left:485px;right:275px;top:491px;bottom:6px}`,
`<nu-title-bar menu="File,Edit,Project,Audio,MIDI,Scores,Media,Transport,Network,Studio,Workspaces,Window,VST Cloud,Hub,Help" title-text="Nuendo Project - Untitled1"></nu-title-bar>
<div class="head"><nu-toolbar></nu-toolbar><nu-status-line></nu-status-line></div>
<nu-info-line></nu-info-line>
<main><nu-tab-panel tabs="Inspector:116,Visibility:110" menu foot="Track:106,Editor:108"><nu-inspector></nu-inspector></nu-tab-panel>
<div class="mid"><nu-track-list></nu-track-list><i class="split"></i><nu-arranger></nu-arranger><nu-scroll-rail></nu-scroll-rail></div>
<nu-tab-panel tabs="VSTi:82,Media:96,CR:70,Meter:96"><nu-right-zone></nu-right-zone></nu-tab-panel></main>
<nu-transport></nu-transport><footer></footer><nu-mix-console></nu-mix-console>`);
</script>
</body>
</html>
